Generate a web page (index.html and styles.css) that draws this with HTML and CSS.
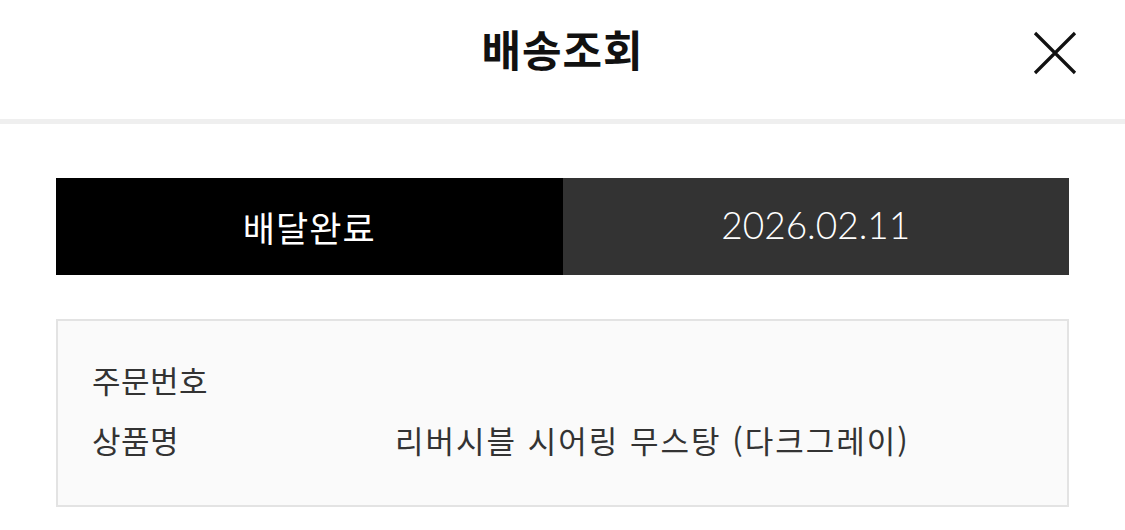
FILE: index.html
```html
<!DOCTYPE html>
<html lang="ko">
<head>
<meta charset="utf-8">
<link rel="stylesheet" href="styles.css">
</head>
<body>
<div class="page">
  <header class="header">
    <h1 class="title">배송조회</h1>
    <button class="close" aria-label="닫기">
      <svg width="44" height="44" viewBox="0 0 44 44"><path d="M2 2 L42 42 M42 2 L2 42" stroke="#111" stroke-width="3.2" fill="none"/></svg>
    </button>
  </header>
  <div class="divider"></div>
  <main class="content">
    <div class="status">
      <div class="status-label">배달완료</div>
      <div class="status-date"><span class="date-text">2026.02.11</span></div>
    </div>
    <div class="info">
      <div class="row"><span class="key">주문번호</span><span class="val"></span></div>
      <div class="row"><span class="key">상품명</span><span class="val">리버시블 시어링 무스탕 (다크그레이)</span></div>
    </div>
  </main>
</div>
</body>
</html>
```
FILE: styles.css
```css
* { box-sizing: border-box; }
html, body { margin: 0; padding: 0; background: #fff; }
body { font-family: "Noto Sans CJK KR", "Noto Sans", sans-serif; color: #111; }
.page { width: 1125px; }
.header {
  position: relative;
  height: 119px;
  display: flex;
  align-items: center;
  justify-content: center;
}
.title {
  margin: 0;
  font-size: 43px;
  font-weight: 700;
  line-height: 1;
  margin-top: -22px;
  letter-spacing: 1px;
}
.close {
  position: absolute;
  right: 48px;
  top: 31px;
  width: 44px;
  height: 44px;
  padding: 0;
  border: 0;
  background: none;
}
.close svg { display: block; }
.divider { height: 5px; background: #efefef; }
.content { padding: 54px 56px 0; }
.status {
  display: flex;
  height: 97px;
}
.status-label, .status-date {
  flex: 1;
  display: flex;
  align-items: center;
  justify-content: center;
  color: #fff;
}
.status-label { background: #000; font-size: 35px; letter-spacing: 1px; }
.status-date {
  background: #333;
  font-family: "Lato", "Noto Sans", sans-serif;
  font-weight: 300;
  font-size: 37px;
}
.date-text { margin-top: -4px; }
.info {
  margin-top: 44px;
  height: 188px;
  border: 2px solid #e3e3e3;
  background: #fafafa;
  padding: 28px 34px 0;
}
.row {
  display: flex;
  height: 60px;
  align-items: center;
  font-size: 31px;
  color: #333;
}
.key { width: 303px; letter-spacing: 0.5px; }
.val { letter-spacing: 2px; }
```
